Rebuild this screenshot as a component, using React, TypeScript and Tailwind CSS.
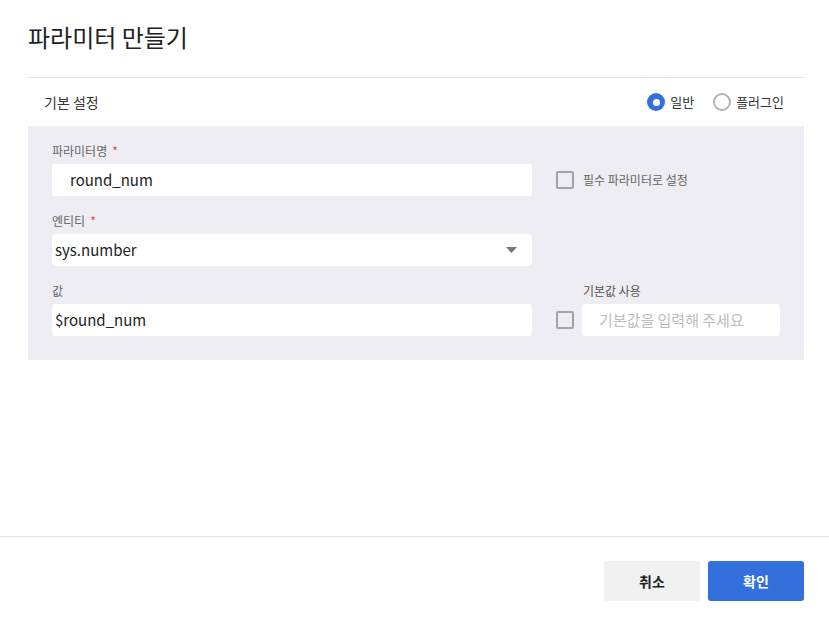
const font = { fontFamily: '"Noto Sans CJK KR", "Noto Sans", sans-serif' };

function Label({ text, required }: { text: string; required?: boolean }) {
  return (
    <div className="h-[18px] mb-[4px] flex items-center text-[12px] text-[#666] leading-[18px]">
      {text}
      {required && <span className="ml-[5px] text-[#e5484d]">*</span>}
    </div>
  );
}

function Checkbox() {
  return <span className="w-[18px] h-[18px] shrink-0 rounded-[2px] border-2 border-[#a3a3a3] bg-[#ededf3]" />;
}

function Radio({ checked, label }: { checked?: boolean; label: string }) {
  return (
    <label className="flex items-center gap-[5px] text-[13px] text-[#333]">
      {checked ? (
        <span className="w-[18px] h-[18px] rounded-full bg-[#3370dc] flex items-center justify-center">
          <span className="w-[7px] h-[7px] rounded-full bg-white" />
        </span>
      ) : (
        <span className="w-[18px] h-[18px] rounded-full border-2 border-[#b3b3b3]" />
      )}
      {label}
    </label>
  );
}

export default function App() {
  return (
    <div className="w-[829px] h-[623px] bg-white flex flex-col" style={font}>
      <div className="ml-[28px] mr-[25px] h-[78px] border-b border-[#e3e3e3] flex items-center">
        <h1 className="text-[24px] text-[#222] pb-[4px]">파라미터 만들기</h1>
      </div>

      <div className="ml-[28px] mr-[25px] h-[48px] pl-[16px] pr-[20px] flex items-center justify-between">
        <span className="text-[14px] text-[#333]">기본 설정</span>
        <div className="flex items-center gap-[19px]">
          <Radio checked label="일반" />
          <Radio label="플러그인" />
        </div>
      </div>

      <div className="ml-[28px] mr-[25px] bg-[#ededf3] px-[24px] pt-[16px] pb-[24px] flex flex-col gap-[16px]">
        <div className="flex gap-[24px] items-end">
          <div className="w-[480px] shrink-0">
            <Label text="파라미터명" required />
            <div className="h-[32px] bg-white rounded-[3px] pl-[18px] flex items-center text-[15px] text-[#222]">round_num</div>
          </div>
          <div className="h-[32px] flex items-center gap-[9px]">
            <Checkbox />
            <span className="text-[12px] text-[#666]">필수 파라미터로 설정</span>
          </div>
        </div>

        <div className="w-[480px]">
          <Label text="엔티티" required />
          <div className="h-[32px] bg-white rounded-[3px] pl-[3px] pr-[15px] flex items-center justify-between text-[15px] text-[#222]">
            sys.number
            <svg width="11" height="6" viewBox="0 0 11 6">
              <path d="M0 0 L11 0 L5.5 6 Z" fill="#777" />
            </svg>
          </div>
        </div>

        <div className="flex gap-[24px] items-end">
          <div className="w-[480px] shrink-0">
            <Label text="값" />
            <div className="h-[32px] bg-white rounded-[3px] pl-[3px] flex items-center text-[15px] text-[#222]">$round_num</div>
          </div>
          <div className="flex items-end gap-[8px]">
            <div className="h-[32px] flex items-center">
              <Checkbox />
            </div>
            <div className="w-[198px] shrink-0">
              <div className="h-[18px] mb-[4px] pl-[1px] flex items-center text-[12px] text-[#555]">기본값 사용</div>
              <div className="h-[32px] bg-white rounded-[3px] pl-[17px] flex items-center text-[15px] text-[#bdbdbd] whitespace-nowrap">기본값을 입력해 주세요</div>
            </div>
          </div>
        </div>
      </div>

      <div className="flex-1" />

      <div className="border-t border-[#e3e3e3] pt-[24px] pb-[22px] pr-[25px] flex justify-end gap-[8px]">
        <button className="w-[96px] h-[40px] rounded-[3px] bg-[#f1f1f1] text-[14px] font-bold text-[#222]">취소</button>
        <button className="w-[96px] h-[40px] rounded-[3px] bg-[#3370dc] text-[14px] font-bold text-white">확인</button>
      </div>
    </div>
  );
}
